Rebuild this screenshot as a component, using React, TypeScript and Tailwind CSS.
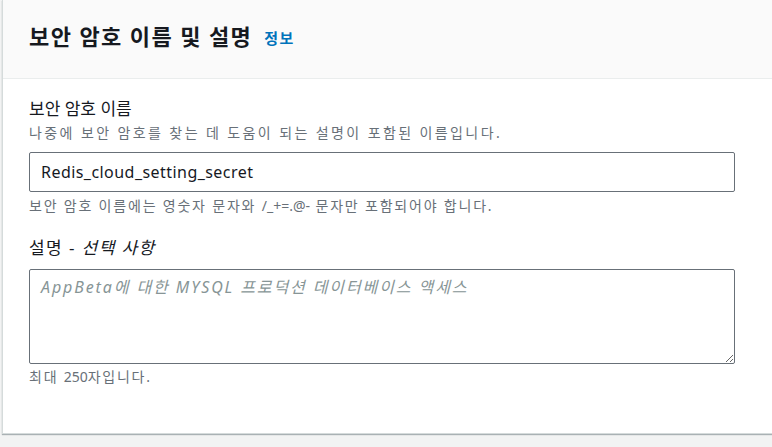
export default function App() {
  return (
    <div className="min-h-[447px] w-full overflow-hidden bg-[#f2f3f3] pl-[2px] font-['Noto_Sans','Noto_Sans_CJK_KR',sans-serif]">
      <div className="h-[434px] w-[800px] border-l border-b border-[#d5dbdb] bg-white shadow-[0_1px_1px_0_rgba(0,28,36,0.3)]">
        <div className="flex h-[79px] items-center gap-[12px] border-b border-[#eaeded] bg-[#fafafa] px-[26px] pb-[6px]">
          <h2 className="text-[22px] font-bold tracking-[1.4px] text-[#16191f]">보안 암호 이름 및 설명</h2>
          <a className="mt-1 text-[15px] font-bold tracking-[1.5px] text-[#0073bb]">정보</a>
        </div>
        <div className="w-[758px] px-[26px] pt-[19px]">
          <div className="text-[17px] leading-[22px] text-[#16191f]">보안 암호 이름</div>
          <div className="mt-[4px] text-sm leading-[18px] tracking-[2.4px] text-[#687078]">
            나중에 보안 암호를 찾는 데 도움이 되는 설명이 포함된 이름입니다.
          </div>
          <div className="mt-[10px] flex h-[40px] items-center rounded-[2px] border border-[#687078] px-[11px] text-base tracking-[0.45px] text-[#16191f]">
            Redis_cloud_setting_secret
          </div>
          <div className="mt-[5px] text-sm leading-[18px] tracking-[1.8px] text-[#687078]">
            보안 암호 이름에는 영숫자 문자와 <span className="tracking-normal">/_+=.@-</span> 문자만 포함되어야 합니다.
          </div>
          <div className="mt-[22px] text-[17px] leading-[22px] tracking-[1.4px] text-[#16191f]">
            설명 - <i>선택 사항</i>
          </div>
          <textarea
            className="mt-[10px] block h-[95px] w-full rounded-[2px] border border-[#687078] px-[11px] py-[5px] text-base text-[#16191f] placeholder:italic placeholder:tracking-[1.9px] placeholder:text-[#879596]"
            placeholder="AppBeta에 대한 MYSQL 프로덕션 데이터베이스 액세스"
          />
          <div className="mt-[4px] text-sm leading-[18px] tracking-[1.75px] text-[#687078]">
            최대 <span className="tracking-normal">250</span>자입니다.
          </div>
        </div>
      </div>
    </div>
  );
}
